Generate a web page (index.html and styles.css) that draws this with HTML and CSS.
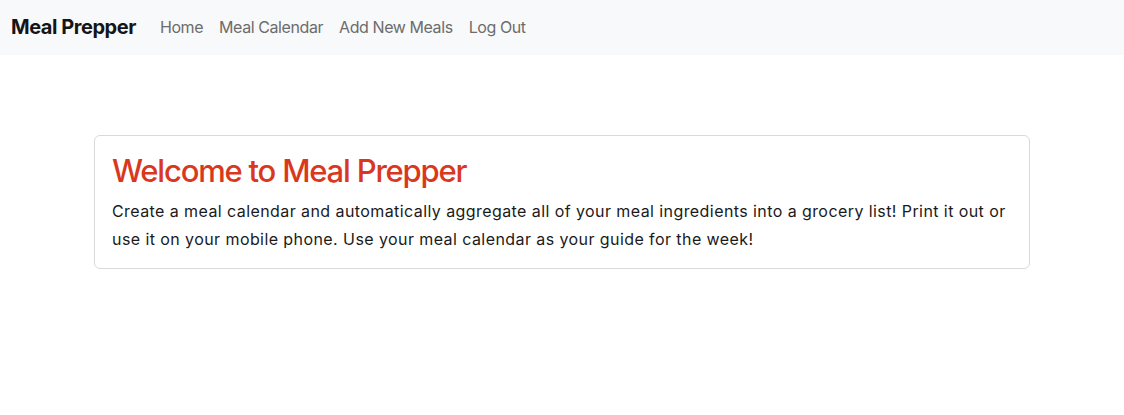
FILE: index.html
```html
<!DOCTYPE html>
<html lang="en">
<head>
<meta charset="utf-8">
<title>Meal Prepper</title>
<link rel="stylesheet" href="styles.css">
</head>
<body>
<nav class="navbar">
  <a class="brand" href="#">Meal Prepper</a>
  <ul class="nav-links">
    <li><a href="#">Home</a></li>
    <li><a href="#">Meal Calendar</a></li>
    <li><a href="#">Add New Meals</a></li>
    <li><a href="#">Log Out</a></li>
  </ul>
</nav>
<main class="container">
  <div class="card">
    <h2 class="card-title">Welcome to Meal Prepper</h2>
    <p class="card-text">Create a meal calendar and automatically aggregate all of your meal ingredients into a grocery list! Print it out or use it on your mobile phone. Use your meal calendar as your guide for the week!</p>
  </div>
</main>
</body>
</html>
```
FILE: styles.css
```css
* { box-sizing: border-box; }
html, body { margin: 0; padding: 0; }
body {
  font-family: Inter, "Noto Sans", "Liberation Sans", sans-serif;
  font-size: 16px;
  line-height: 1.5;
  color: #212529;
  background: #fff;
}
a { text-decoration: none; }
.navbar {
  display: flex;
  align-items: center;
  height: 55px;
  padding: 0 11px 1px;
  background: #f8f9fa;
}
.brand {
  font-size: 20px;
  font-weight: 700;
  color: #151515;
  margin-right: 24px;
  letter-spacing: -0.45px;
}
.nav-links {
  display: flex;
  list-style: none;
  margin: 0;
  padding: 0;
  gap: 16px;
}
.nav-links a {
  color: #6c6c6c;
  font-size: 16px;
  letter-spacing: -0.42px;
}
.container {
  width: 960px;
  margin: 0 auto;
  padding: 80px 12px 0;
}
.card {
  border: 1px solid #d9d9d9;
  border-radius: 6px;
  padding: 16px 17px 15px;
}
.card-title {
  margin: 0 0 8px;
  font-size: 31px;
  font-weight: 500;
  line-height: 1.2;
  letter-spacing: -1.2px;
  color: #d9381e;
}
.card-text {
  margin: 0;
  line-height: 28px;
  letter-spacing: 0.42px;
  color: #1a1a1a;
}
```
